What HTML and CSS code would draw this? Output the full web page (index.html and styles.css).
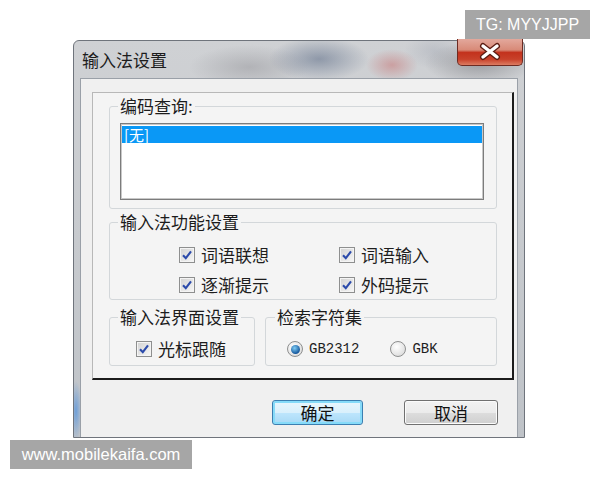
FILE: index.html
```html
<!DOCTYPE html>
<html lang="zh-CN">
<head>
    <meta charset="UTF-8">
    <meta name="viewport" content="width=device-width, initial-scale=1.0">
    <title>输入法设置</title>
    <link rel="stylesheet" href="styles.css">
</head>
<body>
    <div class="window">
        <div class="titlebar">
            <span class="title">输入法设置</span>
            <div class="close">
                <svg width="66" height="27" viewBox="0 0 66 27">
                    <path d="M26 8 L40 19 M40 8 L26 19" stroke="#5b1c12" stroke-width="6" stroke-linecap="round" fill="none"/>
                    <path d="M26 8 L40 19 M40 8 L26 19" stroke="#ffffff" stroke-width="3.4" stroke-linecap="round" fill="none"/>
                </svg>
            </div>
        </div>

        <div class="client">
            <div class="frame">
                <fieldset class="group query-group">
                    <legend>编码查询:</legend>
                    <div class="listbox">
                        <div class="item selected">[无]</div>
                    </div>
                </fieldset>

                <fieldset class="group feature-group">
                    <legend>输入法功能设置</legend>
                    <div class="options">
                        <label class="check"><span class="box"><svg width="14" height="14" viewBox="0 0 14 14"><path d="M3 7.2 L5.8 10.2 L11 3.4" stroke="#2c4bab" stroke-width="2.1" fill="none"/></svg></span>词语联想</label>
                        <label class="check"><span class="box"><svg width="14" height="14" viewBox="0 0 14 14"><path d="M3 7.2 L5.8 10.2 L11 3.4" stroke="#2c4bab" stroke-width="2.1" fill="none"/></svg></span>词语输入</label>
                        <label class="check"><span class="box"><svg width="14" height="14" viewBox="0 0 14 14"><path d="M3 7.2 L5.8 10.2 L11 3.4" stroke="#2c4bab" stroke-width="2.1" fill="none"/></svg></span>逐渐提示</label>
                        <label class="check"><span class="box"><svg width="14" height="14" viewBox="0 0 14 14"><path d="M3 7.2 L5.8 10.2 L11 3.4" stroke="#2c4bab" stroke-width="2.1" fill="none"/></svg></span>外码提示</label>
                    </div>
                </fieldset>

                <div class="group-row">
                    <fieldset class="group ui-group">
                        <legend>输入法界面设置</legend>
                        <div class="row">
                            <label class="check"><span class="box"><svg width="14" height="14" viewBox="0 0 14 14"><path d="M3 7.2 L5.8 10.2 L11 3.4" stroke="#2c4bab" stroke-width="2.1" fill="none"/></svg></span>光标跟随</label>
                        </div>
                    </fieldset>
                    <fieldset class="group charset-group">
                        <legend>检索字符集</legend>
                        <div class="row">
                            <label class="radio"><span class="dot on"></span>GB2312</label>
                            <label class="radio gbk"><span class="dot"></span>GBK</label>
                        </div>
                    </fieldset>
                </div>
            </div>

            <div class="buttons">
                <button class="btn default">确定</button>
                <button class="btn cancel">取消</button>
            </div>
        </div>
    </div>

    <div class="mark tg">TG: MYYJJPP</div>
    <div class="mark site">www.mobilekaifa.com</div>
</body>
</html>
```

FILE: styles.css
```css
* {
    box-sizing: border-box;
}
body {
    margin: 0;
    width: 600px;
    height: 480px;
    position: relative;
    background-color: #fff;
    font-family: "Noto Sans CJK SC", sans-serif;
    color: #1e1e1e;
    overflow: hidden;
}
.window {
    width: 452px;
    height: 398px;
    margin: 40px 0 0 73px;
    border: 1px solid #6f747c;
    border-radius: 6px 6px 0 0;
    display: flex;
    flex-direction: column;
    background:
        radial-gradient(ellipse 50px 22px at 245px 18px, rgba(100, 115, 140, 0.6), transparent),
        radial-gradient(ellipse 26px 16px at 318px 24px, rgba(200, 120, 120, 0.55), transparent),
        radial-gradient(ellipse 60px 22px at 175px 26px, rgba(150, 150, 155, 0.5), transparent),
        radial-gradient(ellipse 55px 22px at 405px 22px, rgba(115, 115, 120, 0.55), transparent),
        radial-gradient(ellipse 30px 18px at 360px 10px, rgba(170, 175, 185, 0.5), transparent),
        radial-gradient(ellipse 6px 30px at 2px 370px, rgba(90, 150, 220, 0.8), transparent),
        linear-gradient(#cfd1d4, #bfc3c8);
}
.titlebar {
    height: 37px;
    display: flex;
    align-items: center;
    padding: 0 0 0 8px;
}
.title {
    font-size: 17px;
    line-height: 20px;
    color: #1c1c1c;
}
.close {
    margin-left: auto;
    align-self: flex-start;
    margin-top: -2px;
    margin-right: 1px;
    width: 66px;
    height: 27px;
    border: 1px solid #6e2b22;
    border-top: none;
    border-radius: 0 0 5px 5px;
    background: linear-gradient(#e3a89c 0%, #d88a78 42%, #c3321d 52%, #c8412a 78%, #dc7c62 100%);
}
.close svg {
    display: block;
    margin: -1px 0 0 -1px;
}
.client {
    flex: 1;
    margin: 0 6px;
    border: 1px solid #9aa0a8;
    border-bottom: none;
    background-color: #f0f0f0;
    display: flex;
    flex-direction: column;
}
.frame {
    margin: 13px 3px 0 11px;
    padding: 3px 15px 12px 16px;
    background-color: #f4f4f4;
    border-top: 1px solid #b8b8b8;
    border-left: 1px solid #b8b8b8;
    border-right: 2px solid #1c1c1c;
    border-bottom: 2px solid #1c1c1c;
}
.group {
    margin: 0;
    padding: 0 12px 8px 10px;
    border: 1px solid #d3d7da;
    border-radius: 3px;
    min-width: 0;
}
.group legend {
    padding: 0 2px;
    margin-left: -2px;
    font-size: 17px;
    line-height: 20px;
    color: #1c1c1c;
}
.listbox {
    margin-top: 7px;
    height: 77px;
    border: 1px solid #7c7c7c;
    box-shadow: inset 0 0 0 1px #c8c8c8;
    background-color: #fff;
    padding: 2px 1px;
}
.item {
    height: 17px;
    padding-left: 2px;
    font-size: 15px;
    line-height: 17px;
}
.item.selected {
    background-color: #0a98f6;
    color: #fff;
}
.feature-group {
    margin-top: 3px;
    padding-bottom: 1px;
}
.options {
    display: grid;
    grid-template-columns: 160px 160px;
    grid-auto-rows: 26px;
    row-gap: 4px;
    margin: 10px 0 0 59px;
}
.check, .radio {
    display: flex;
    align-items: center;
    gap: 6px;
    font-size: 17px;
    line-height: 20px;
    height: 26px;
}
.box {
    width: 16px;
    height: 16px;
    border: 1px solid #8e8f8f;
    background: linear-gradient(135deg, #d2d2d2, #f7f7f7);
    box-shadow: inset 0 0 0 1px #f4f4f4;
    display: flex;
    align-items: center;
    justify-content: center;
}
.group-row {
    display: flex;
    gap: 10px;
    margin-top: 7px;
}
.ui-group {
    width: 146px;
    padding-bottom: 3px;
}
.charset-group {
    width: 232px;
    padding: 0 0 3px 11px;
}
.row {
    display: flex;
    align-items: center;
    margin-top: 9px;
}
.ui-group .row {
    margin-left: 16px;
}
.charset-group .row {
    margin-left: 10px;
}
.radio {
    font-family: "Liberation Mono", monospace;
    font-size: 14px;
    color: #1e1e1e;
}
.radio.gbk {
    margin-left: 31px;
}
.dot {
    width: 16px;
    height: 16px;
    border-radius: 50%;
    border: 1px solid #8e8f8f;
    background: radial-gradient(circle at 40% 35%, #ffffff, #d4d4d4);
    display: flex;
    align-items: center;
    justify-content: center;
}
.dot.on::after {
    content: "";
    width: 9px;
    height: 9px;
    border-radius: 50%;
    background: radial-gradient(circle at 40% 35%, #7fcdf6, #15579c 70%);
}
.buttons {
    display: flex;
    justify-content: flex-end;
    gap: 41px;
    margin-top: 20px;
    padding-right: 19px;
}
.btn {
    height: 25px;
    font-family: "Noto Sans CJK SC", sans-serif;
    font-size: 17px;
    line-height: 20px;
    color: #111;
    padding: 0;
    border-radius: 3px;
}
.btn.default {
    width: 91px;
    border: 1px solid #3c7fb1;
    box-shadow: inset 0 0 0 2px #86dbf9;
    background: linear-gradient(#eaf6fd, #d9f0fc 50%, #bee6fd 50%, #a7d9f5);
}
.btn.cancel {
    width: 94px;
    border: 1px solid #707070;
    box-shadow: inset 0 0 0 1px #fbfbfb;
    background: linear-gradient(#f2f2f2, #ebebeb 50%, #dddddd 50%, #cfcfcf);
}
.mark {
    position: absolute;
    background-color: #a6a6a6;
    color: #fff;
    font-family: "Liberation Sans", sans-serif;
    line-height: 29px;
}
.tg {
    left: 465px;
    top: 10px;
    width: 125px;
    height: 29px;
    font-size: 16px;
    text-align: center;
}
.site {
    left: 10px;
    top: 440px;
    width: 182px;
    height: 29px;
    font-size: 16.5px;
    text-align: center;
}
```
